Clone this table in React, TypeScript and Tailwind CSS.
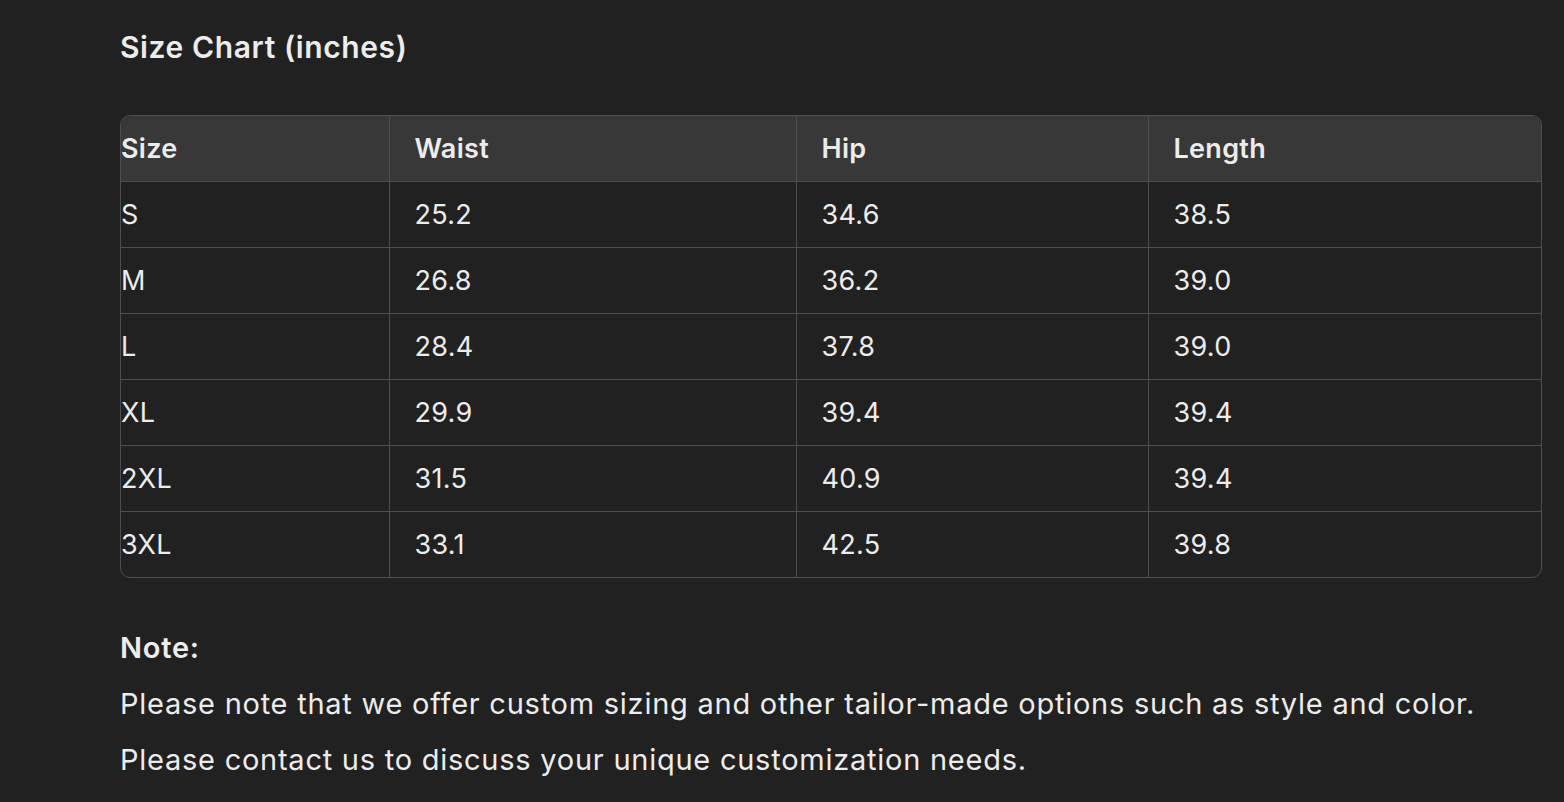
import React from "react";

const rows = [
  ["S", "25.2", "34.6", "38.5"],
  ["M", "26.8", "36.2", "39.0"],
  ["L", "28.4", "37.8", "39.0"],
  ["XL", "29.9", "39.4", "39.4"],
  ["2XL", "31.5", "40.9", "39.4"],
  ["3XL", "33.1", "42.5", "39.8"],
];

export default function App() {
  return (
    <div
      className="w-[1564px] h-[802px] bg-[#212121] text-[#ececec] overflow-hidden pl-[120px] pr-[22px]"
      style={{ fontFamily: "Inter, 'Noto Sans', sans-serif" }}
    >
      <h2 className="text-[30px] font-semibold leading-[40px] pt-[27px] tracking-[0.6px]">Size Chart (inches)</h2>
      <div className="mt-[48px] border border-[#4e4e4e] rounded-[10px] overflow-hidden">
        <table className="w-full border-collapse text-[27px] tracking-[0.3px]">
          <colgroup>
            <col className="w-[268px]" />
            <col className="w-[407px]" />
            <col className="w-[352px]" />
            <col />
          </colgroup>
          <thead>
            <tr className="bg-[#383838] h-[65px]">
              {["Size", "Waist", "Hip", "Length"].map((h, i) => (
                <th
                  key={h}
                  className={`text-left font-semibold pt-[2px] border-b border-[#4e4e4e] ${i > 0 ? "border-l pl-[25px]" : "pl-0"}`}
                >
                  {h}
                </th>
              ))}
            </tr>
          </thead>
          <tbody>
            {rows.map((r, ri) => (
              <tr key={ri} className="h-[66px]">
                {r.map((c, i) => (
                  <td
                    key={i}
                    className={`font-normal pt-[2px] ${ri < rows.length - 1 ? "border-b border-[#4e4e4e]" : ""} ${i > 0 ? "border-l border-[#4e4e4e] pl-[25px]" : "pl-0"}`}
                  >
                    {c}
                  </td>
                ))}
              </tr>
            ))}
          </tbody>
        </table>
      </div>
      <div className="mt-[42px] text-[29px] leading-[56px] tracking-[0.75px]">
        <p className="font-semibold">Note:</p>
        <p>Please note that we offer custom sizing and other tailor-made options such as style and color.</p>
        <p>Please contact us to discuss your unique customization needs.</p>
      </div>
    </div>
  );
}
